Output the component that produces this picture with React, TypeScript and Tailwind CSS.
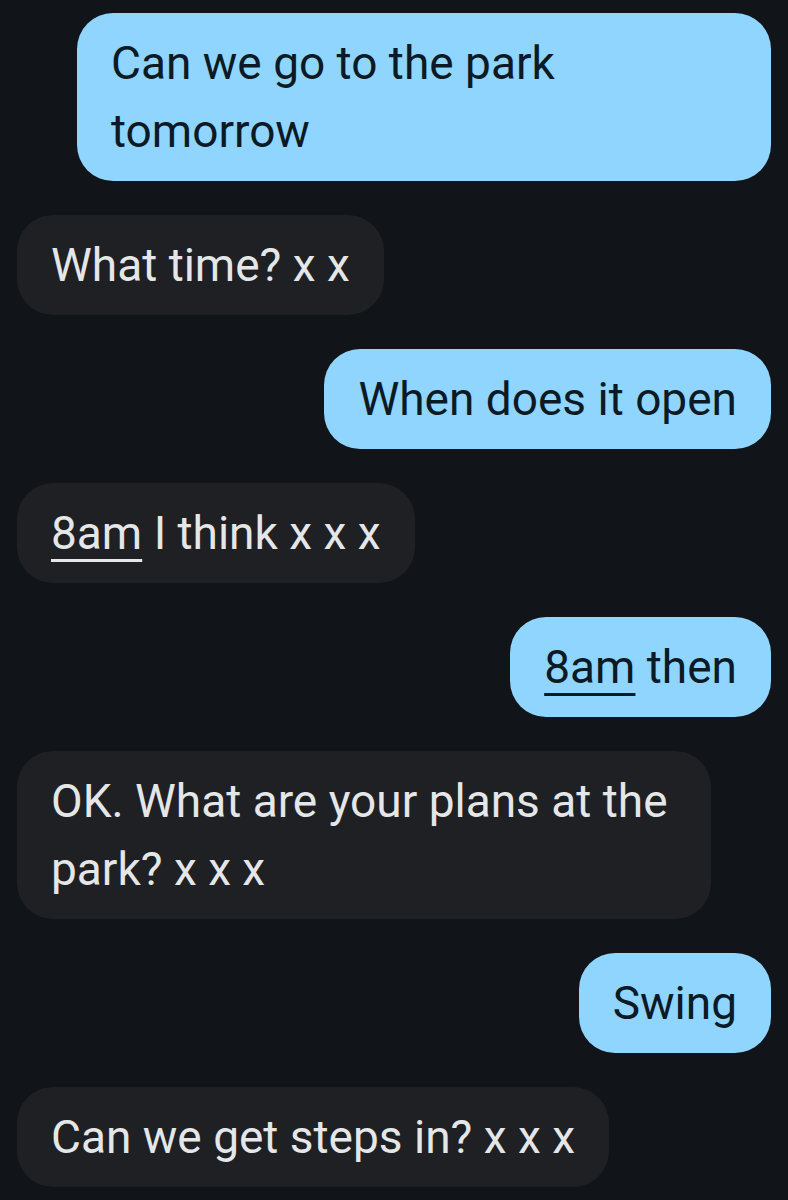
import React from 'react';

type Msg = { me: boolean; parts: React.ReactNode };

const U: React.FC<{ children: React.ReactNode }> = ({ children }) => (
  <span className="underline decoration-[3px] underline-offset-[10px]">{children}</span>
);

const messages: Msg[] = [
  { me: true, parts: 'Can we go to the park tomorrow' },
  { me: false, parts: 'What time? x x' },
  { me: true, parts: 'When does it open' },
  { me: false, parts: <><U>8am</U> I think x x x</> },
  { me: true, parts: <><U>8am</U> then</> },
  { me: false, parts: 'OK. What are your plans at the park? x x x' },
  { me: true, parts: 'Swing' },
  { me: false, parts: 'Can we get steps in? x x x' },
];

export default function App() {
  return (
    <div className="w-[788px] h-[1200px] overflow-hidden bg-[#111418] font-['Roboto','Liberation_Sans',sans-serif]">
      <div className="flex flex-col gap-[34px] pt-[13px] pl-[17px] pr-[17px]">
        {messages.map((m, i) => (
          <div key={i} className={`flex ${m.me ? 'justify-end' : 'justify-start'}`}>
            <div
              className={`max-w-[694px] rounded-[36px] px-[34px] py-[16px] text-[46px] leading-[68px] ${
                m.me ? 'bg-[#8fd5fe] text-[#0b1a24]' : 'bg-[#1e2023] text-[#e4e6e8]'
              }`}
            >
              {m.parts}
            </div>
          </div>
        ))}
      </div>
    </div>
  );
}
